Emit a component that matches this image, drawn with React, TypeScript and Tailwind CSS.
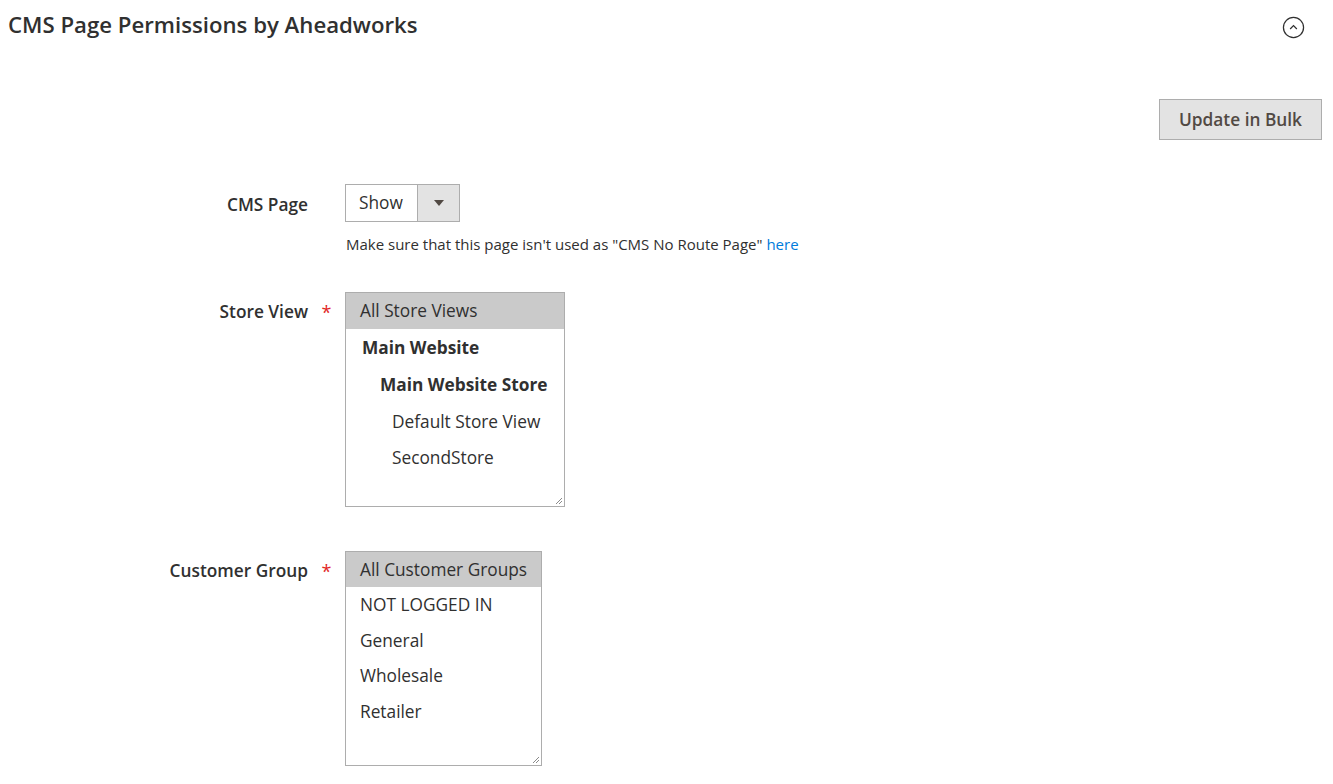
import React from "react";

const Resize = () => (
  <svg className="absolute right-[1px] bottom-[1px]" width="9" height="9" viewBox="0 0 9 9">
    <path d="M8 2 L2 8 M8 5 L5 8" stroke="#8a8a8a" strokeWidth="1" />
  </svg>
);

export default function App() {
  return (
    <div className="w-[1333px] h-[784px] bg-white text-[#303030] overflow-hidden" style={{ fontFamily: '"Open Sans", sans-serif' }}>
      <div className="flex items-start justify-between pl-2 pr-[28px] pt-[9px]">
        <h2 className="text-[22.2px] font-semibold leading-[32px] text-[#303030]">CMS Page Permissions by Aheadworks</h2>
        <svg className="mt-[7px]" width="23" height="23" viewBox="0 0 24 24">
          <circle cx="12" cy="12" r="10.5" fill="none" stroke="#303030" strokeWidth="1.3" />
          <path d="M8.5 13.5 L12 10 L15.5 13.5" fill="none" stroke="#303030" strokeWidth="1.3" />
        </svg>
      </div>
      <div className="flex justify-end pr-[11px] mt-[58px]">
        <button className="h-[41px] w-[163px] bg-[#e3e3e3] border border-[#adadad] text-[#514943] text-[17.3px] font-semibold">
          Update in Bulk
        </button>
      </div>
      <div className="flex mt-[44px]">
        <div className="w-[308px] text-right text-[17.3px] font-semibold leading-[38px] pt-[2px]">CMS Page</div>
        <div className="ml-[37px]">
          <div className="flex h-[38px] w-[115px] border border-[#adadad]">
            <div className="flex-1 flex items-center pl-[13px] text-[17.3px] text-[#303030]">Show</div>
            <div className="w-[42px] bg-[#e3e3e3] border-l border-[#adadad] flex items-center justify-center">
              <svg width="10" height="6" viewBox="0 0 10 6"><path d="M0 0 L10 0 L5 6 Z" fill="#514943" /></svg>
            </div>
          </div>
          <div className="mt-[12px] text-[15px] leading-[20px] ml-[1px]">
            Make sure that this page isn't used as "CMS No Route Page" <span className="text-[#007bdb]">here</span>
          </div>
        </div>
      </div>
      <div className="flex mt-[38px]">
        <div className="w-[308px] text-right text-[17.3px] font-semibold leading-[38px] pt-[1px]">Store View</div>
        <div className="w-[37px] text-center text-[#e22626] text-[18px] leading-[40px]">*</div>
        <div className="relative w-[220px] h-[215px] border border-[#adadad] text-[17.3px]">
          <div className="h-[36px] bg-[#cacaca] flex items-center pl-[14px]">All Store Views</div>
          <div className="h-[37px] flex items-center pl-[16px] font-bold">Main Website</div>
          <div className="h-[37px] flex items-center pl-[34px] font-bold">Main Website Store</div>
          <div className="h-[37px] flex items-center pl-[46px]">Default Store View</div>
          <div className="h-[36px] flex items-center pl-[46px]">SecondStore</div>
          <Resize />
        </div>
      </div>
      <div className="flex mt-[44px]">
        <div className="w-[308px] text-right text-[17.3px] font-semibold leading-[38px] pt-[1px]">Customer Group</div>
        <div className="w-[37px] text-center text-[#e22626] text-[18px] leading-[40px]">*</div>
        <div className="relative w-[197px] h-[215px] border border-[#adadad] text-[17.3px]">
          <div className="h-[35px] bg-[#cacaca] flex items-center pl-[14px]">All Customer Groups</div>
          <div className="h-[36px] flex items-center pl-[14px]">NOT LOGGED IN</div>
          <div className="h-[35px] flex items-center pl-[14px]">General</div>
          <div className="h-[36px] flex items-center pl-[14px]">Wholesale</div>
          <div className="h-[35px] flex items-center pl-[14px]">Retailer</div>
          <Resize />
        </div>
      </div>
    </div>
  );
}
